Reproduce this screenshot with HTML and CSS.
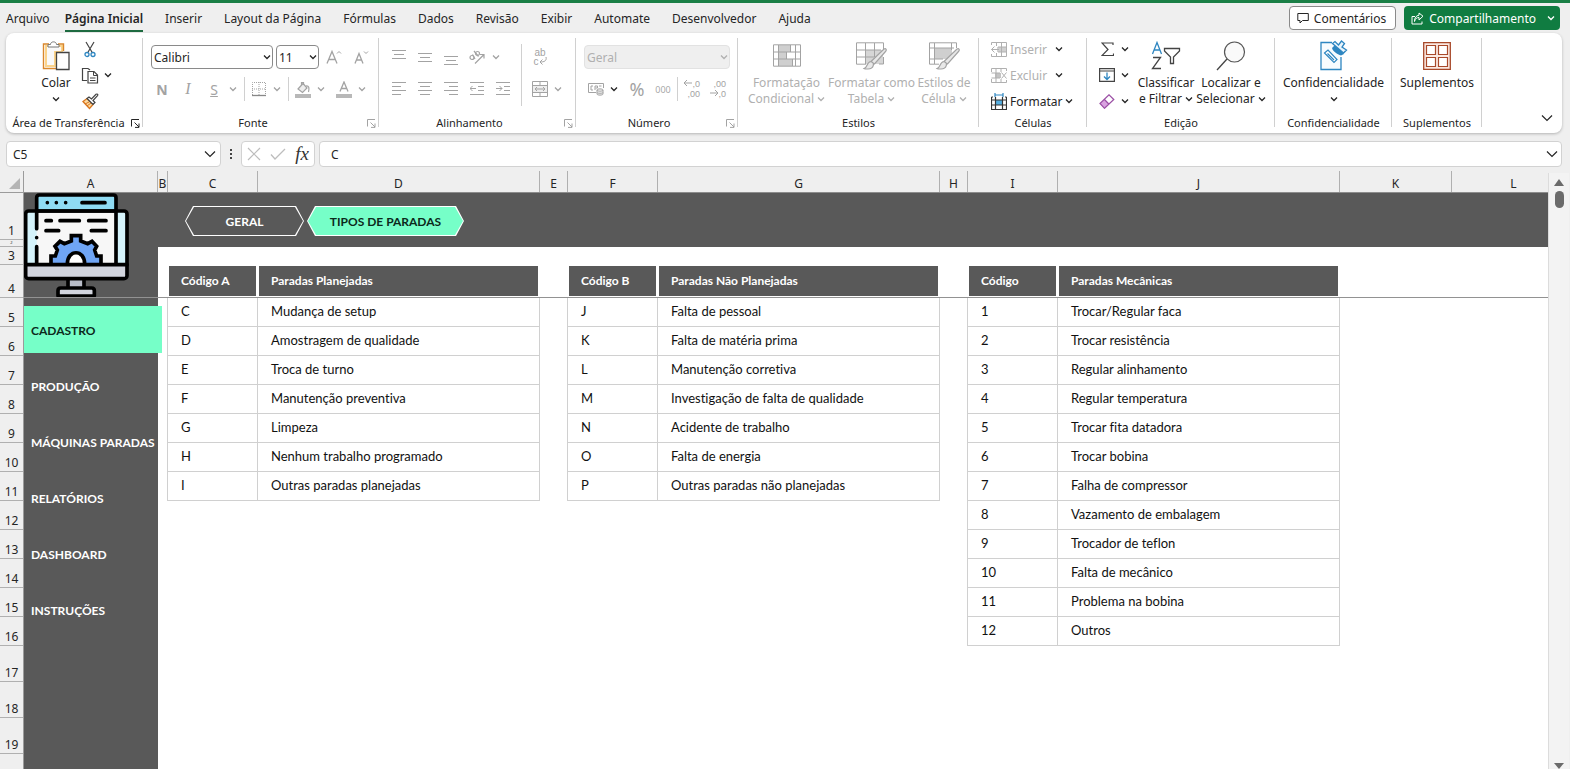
FILE: index.html
```html
<!DOCTYPE html>
<html lang="pt-BR">
<head>
  <meta charset="UTF-8">
  <meta name="viewport" content="width=device-width, initial-scale=1.0">
  <title>Cadastro - Tipos de Paradas</title>
  <link rel="stylesheet" href="styles.css">
</head>
<body>
  <svg class="defs" aria-hidden="true">
    <symbol id="chev" viewBox="0 0 8 8"><path d="M1 2.5 4 5.5 7 2.5" fill="none" stroke="currentColor" stroke-width="1.3"/></symbol>
    <symbol id="chev-lg" viewBox="0 0 12 12"><path d="M1 3.5 6 8.5 11 3.5" fill="none" stroke="currentColor" stroke-width="1.2"/></symbol>
    <symbol id="launch" viewBox="0 0 9 9"><path d="M.5 7.500V.5H8M3.500 3.500 8 8M8 4.500V8.400H4" fill="none" stroke="currentColor"/></symbol>
  </svg>

  <header class="menu-bar">
    <nav class="menu">
      <a href="#">Arquivo</a>
      <a href="#" class="active">Página Inicial</a>
      <a href="#">Inserir</a>
      <a href="#">Layout da Página</a>
      <a href="#">Fórmulas</a>
      <a href="#">Dados</a>
      <a href="#">Revisão</a>
      <a href="#">Exibir</a>
      <a href="#">Automate</a>
      <a href="#">Desenvolvedor</a>
      <a href="#">Ajuda</a>
    </nav>
    <div class="menu-actions">
      <button class="btn-comments">
        <svg width="12" height="12" viewBox="0 0 12 12"><path d="M.8 1.500H11.300V8.500H5.500L3 11V8.500H.8Z" fill="none" stroke="currentColor"/></svg>
        Comentários
      </button>
      <button class="btn-share">
        <svg width="13" height="13" viewBox="0 0 13 13"><path d="M4 4.500H1V12H11V9.500M3.500 9.500C4 6.500 6 5.500 8 5.500V8L12 4.200 8 1V3.200C5 3.500 3.500 6 3.500 9.500Z" fill="none" stroke="currentColor"/></svg>
        <span>Compartilhamento</span>
        <svg class="chev"><use href="#chev"/></svg>
      </button>
    </div>
  </header>

  <section class="ribbon">
    <div class="group g-clipboard">
      <div class="group-body">
        <button class="big">
          <span class="big-icon"><svg width="28" height="31" viewBox="0 0 28 31"><path d="M7 4H1.500V28.500H14" fill="none" stroke="#d9872b" stroke-width="1.400"/><path d="M4 6V26H13V12H20V6Z" fill="#f9f9f9" stroke="#fbd38a" stroke-width="2"/><path d="M16 4H21.500V11" fill="none" stroke="#d9872b" stroke-width="1.400"/><path d="M6 7V4.500H8.500C8.500 1 14.500 1 14.500 4.500H17V7Z" fill="#fff" stroke="#777"/><path d="M14.500 12.500H27V29.500H14.500Z" fill="#fff" stroke="#444" stroke-width="1.300"/></svg></span>
          <span>Colar</span>
          <svg class="chev"><use href="#chev"/></svg>
        </button>
        <div class="rows3">
          <div><button class="ico" aria-label="Recortar"><svg width="12" height="17" viewBox="0 0 12 17"><path d="M2 1 8.500 12M10 1 3.500 12" fill="none" stroke="#444" stroke-width="1.200"/><circle cx="3" cy="13.500" r="2" fill="none" stroke="#2e86c1" stroke-width="1.300"/><circle cx="9" cy="13.500" r="2" fill="none" stroke="#2e86c1" stroke-width="1.300"/></svg></button></div>
          <div><button class="ico" aria-label="Copiar"><svg width="18" height="17" viewBox="0 0 18 17"><path d="M6 13.500H1.500V1.500H7L9 3" fill="none" stroke="#444" stroke-width="1.200"/><path d="M7 4.500H13L16.500 8V16H7Z" fill="#fff" stroke="#444" stroke-width="1.200"/><path d="M12.500 4.500V8.500H16.500M9 11H14.500M9 13.500H14.500" fill="none" stroke="#444"/></svg></button><button class="drop" aria-label="Opções de cópia"><svg class="chev"><use href="#chev"/></svg></button></div>
          <div><button class="ico" aria-label="Pincel de formatação"><svg width="17" height="17" viewBox="0 0 17 17"><path d="M1 8.500 5 5.500 11 11.500 7.500 15.500Z" fill="#fbd9a0" stroke="#d9761f" stroke-width="1.300"/><path d="M3 11 7 9M5 13 9 10" stroke="#d9761f"/><path d="M5 5.500 7 4 9.500 6 14 1.300C15.300.5 16.300 1.500 15.500 2.700L11 7.500 13 9.500 11 11.500Z" fill="#fff" stroke="#444" stroke-width="1.200"/></svg></button></div>
        </div>
      </div>
      <div class="group-foot"><span>Área de Transferência</span><button aria-label="Mais opções"><svg width="9" height="9"><use href="#launch"/></svg></button></div>
    </div>

    <div class="group g-font">
      <div class="group-body rows2">
        <div class="row fields">
          <label class="field font-name"><select aria-label="Fonte"><option>Calibri</option></select><svg class="chev"><use href="#chev"/></svg></label>
          <label class="field font-size"><select aria-label="Tamanho da fonte"><option>11</option></select><svg class="chev"><use href="#chev"/></svg></label>
          <button class="ico off" aria-label="Aumentar fonte"><svg width="16" height="16" viewBox="0 0 16 16"><path d="M1 14.500 6 2.500 11 14.500M3 10.500H9" fill="none" stroke="currentColor" stroke-width="1.300"/><path d="M11 4.500 13 2.500 15 4.500" fill="none" stroke="currentColor"/></svg></button>
          <button class="ico off" aria-label="Diminuir fonte"><svg width="16" height="16" viewBox="0 0 16 16"><path d="M2 14.500 6 4.500 10 14.500M3.500 11H8.500" fill="none" stroke="currentColor" stroke-width="1.300"/><path d="M11 2.500 13 4.500 15 2.500" fill="none" stroke="currentColor"/></svg></button>
        </div>
        <div class="row off">
          <button class="ico letter bold">N</button>
          <button class="ico letter italic">I</button>
          <button class="ico letter under">S</button>
          <button class="drop" aria-label="Sublinhado"><svg class="chev"><use href="#chev"/></svg></button>
          <i class="sep"></i>
          <button class="ico" aria-label="Bordas"><svg width="16" height="16" viewBox="0 0 16 16"><path d="M1.500 14V1.500H14.500V14M8 1V14M1 8H15" fill="none" stroke="currentColor" stroke-dasharray="1 1"/><path d="M1 14.500H15" stroke="#888" stroke-width="1.300"/></svg></button>
          <button class="drop" aria-label="Mais bordas"><svg class="chev"><use href="#chev"/></svg></button>
          <i class="sep"></i>
          <button class="ico" aria-label="Cor de preenchimento"><svg width="16" height="17" viewBox="0 0 16 17"><path d="M3 8 8 2.500 12 7 7.500 11.500Z" fill="#eee" stroke="currentColor" stroke-width="1.200"/><path d="M6.500 4V1.500H8.500V4M11 5C14 4.500 14.500 7 13.500 11" fill="none" stroke="currentColor" stroke-width="1.200"/><path d="M0 13H16V17H0Z" fill="#b8b8b8"/></svg></button>
          <button class="drop" aria-label="Mais cores"><svg class="chev"><use href="#chev"/></svg></button>
          <button class="ico spaced" aria-label="Cor da fonte"><svg width="16" height="17" viewBox="0 0 16 17"><path d="M4 10.500 8 1 12 10.500M5.500 7.500H10.500" fill="none" stroke="currentColor" stroke-width="1.300"/><path d="M0 13H16V17H0Z" fill="#b8b8b8"/></svg></button>
          <button class="drop" aria-label="Mais cores da fonte"><svg class="chev"><use href="#chev"/></svg></button>
        </div>
      </div>
      <div class="group-foot dim"><span>Fonte</span><button aria-label="Mais opções"><svg width="9" height="9"><use href="#launch"/></svg></button></div>
    </div>

    <div class="group g-align">
      <div class="group-body off">
        <div class="rows2">
          <div class="row">
            <button class="ico" aria-label="Alinhar acima"><svg width="14" height="16" viewBox="0 0 14 16"><path d="M0 1.500H14M2 5.500H12M0 9.500H14" stroke="currentColor"/></svg></button>
            <button class="ico" aria-label="Alinhar no meio"><svg width="14" height="16" viewBox="0 0 14 16"><path d="M0 4.500H14M2 8.500H12M0 12.500H14" stroke="currentColor"/></svg></button>
            <button class="ico" aria-label="Alinhar abaixo"><svg width="14" height="16" viewBox="0 0 14 16"><path d="M0 7.500H14M2 11.500H12M0 15.500H14" stroke="currentColor"/></svg></button>
            <button class="ico" aria-label="Orientação"><svg width="16" height="16" viewBox="0 0 16 16"><g fill="none" stroke="currentColor" stroke-width="1.200"><circle cx="3" cy="8.500" r="2"/><path d="M3.500 5.500 6 10M5 2 9.500 7.500"/><circle cx="8.500" cy="4.500" r="2"/><path d="M6 14.500 15 5.500M11 5.500H15V9.500"/></g></svg></button>
            <button class="drop" aria-label="Mais orientações"><svg class="chev"><use href="#chev"/></svg></button>
          </div>
          <div class="row">
            <button class="ico" aria-label="Alinhar à esquerda"><svg width="14" height="14" viewBox="0 0 14 14"><path d="M0 .5H14M0 4.500H9M0 8.500H14M0 12.500H9" stroke="currentColor"/></svg></button>
            <button class="ico" aria-label="Centralizar"><svg width="14" height="14" viewBox="0 0 14 14"><path d="M0 .5H14M2 4.500H12M0 8.500H14M2 12.500H12" stroke="currentColor"/></svg></button>
            <button class="ico" aria-label="Alinhar à direita"><svg width="14" height="14" viewBox="0 0 14 14"><path d="M0 .5H14M5 4.500H14M0 8.500H14M5 12.500H14" stroke="currentColor"/></svg></button>
            <button class="ico" aria-label="Diminuir recuo"><svg width="14" height="14" viewBox="0 0 14 14"><path d="M0 .5H14M8 4.500H14M8 8.500H14M0 12.500H14M0 6.500H6M2.500 4 0 6.500 2.500 9" fill="none" stroke="currentColor"/></svg></button>
            <button class="ico" aria-label="Aumentar recuo"><svg width="14" height="14" viewBox="0 0 14 14"><path d="M0 .5H14M8 4.500H14M8 8.500H14M0 12.500H14M0 6.500H6M3.500 4 6 6.500 3.500 9" fill="none" stroke="currentColor"/></svg></button>
          </div>
        </div>
        <i class="sep tall"></i>
        <div class="rows2">
          <div class="row"><button class="ico wrap" aria-label="Quebrar texto"><span>ab</span><span>c<svg width="8" height="8" viewBox="0 0 8 8"><path d="M7 0C8 4 5 5 1 5M3.500 2.500 1 5 3.500 7.500" fill="none" stroke="currentColor"/></svg></span></button></div>
          <div class="row">
            <button class="ico" aria-label="Mesclar"><svg width="16" height="16" viewBox="0 0 16 16"><path d="M1 4.500H15V11.500H1Z" fill="#eee"/><path d="M.5 .5H15.500V15.500H.5ZM.5 4.500H15.500M.5 11.500H15.500M8 .5V4.500M8 11.500V15.500M3 8H13M5 6 3 8 5 10M11 6 13 8 11 10" fill="none" stroke="currentColor"/></svg></button>
            <button class="drop" aria-label="Mais opções de mesclar"><svg class="chev"><use href="#chev"/></svg></button>
          </div>
        </div>
      </div>
      <div class="group-foot dim"><span>Alinhamento</span><button aria-label="Mais opções"><svg width="9" height="9"><use href="#launch"/></svg></button></div>
    </div>

    <div class="group g-number">
      <div class="group-body rows2">
        <div class="row"><label class="field number-format off"><select aria-label="Formato de número" disabled><option>Geral</option></select><svg class="chev"><use href="#chev"/></svg></label></div>
        <div class="row off">
          <button class="ico" aria-label="Moeda"><svg width="16" height="14" viewBox="0 0 16 14"><path d="M8 10.500H.5V1.500H15.500V6M5 4H3V8H5M7 8V4H9.500V6H7.500M11 4H13.500" fill="none" stroke="currentColor"/><path d="M9 8C9 6.500 15 6.500 15 8V12C15 13.500 9 13.500 9 12ZM9 8C9 9.500 15 9.500 15 8M9 10.500C9 11.500 15 11.500 15 10.500" fill="#eee" stroke="currentColor"/></svg></button>
          <button class="drop on" aria-label="Mais moedas"><svg class="chev"><use href="#chev"/></svg></button>
          <button class="ico pct">%</button>
          <button class="ico zeros">000</button>
          <i class="sep"></i>
          <button class="ico dec"><span><svg width="8" height="8" viewBox="0 0 8 8"><path d="M0 4H8M3 1 0 4 3 7" fill="none" stroke="currentColor"/></svg>,0</span><span>,00</span></button>
          <button class="ico dec"><span>,00</span><span><svg width="8" height="8" viewBox="0 0 8 8"><path d="M0 4H8M5 1 8 4 5 7" fill="none" stroke="currentColor"/></svg>,0</span></button>
        </div>
      </div>
      <div class="group-foot dim"><span>Número</span><button aria-label="Mais opções"><svg width="9" height="9"><use href="#launch"/></svg></button></div>
    </div>

    <div class="group g-styles">
      <div class="group-body off">
        <button class="big wide">
          <span class="big-icon"><svg width="28" height="24" viewBox="0 0 28 24"><path d="M5.500 1H17.500V8H13.500V15H19.500V22H5.500Z" fill="#cfcfcf"/><path d="M.5 .8H27.500V22.200H.5ZM.5 8H27.500M.5 15H27.500M5.500 1V22M22.500 1V22M17.500 1V8M13.500 8V15M19.500 15V22" fill="none" stroke="currentColor"/></svg></span>
          <span>Formatação</span>
          <span>Condicional <svg class="chev"><use href="#chev"/></svg></span>
        </button>
        <button class="big wide">
          <span class="big-icon"><svg width="31" height="28" viewBox="0 0 31 28"><path d="M9.500 8H27V22H9.500Z" fill="#d6d6d6"/><path d="M10 22.200H.5V.8H27.500V7M.5 8H25M.5 15H18M9.500 1V22M18.500 1V15M23 22H27.500V15" fill="none" stroke="currentColor"/><path d="M8 26.500C12 26 10 20 15 19.500 19 20.500 18 27 12 27 10 27 8.500 27 8 26.500ZM15 19.500 28 7C30 6 31 8 29.500 9.500L18.500 22Z" fill="#e8e8e8" stroke="currentColor" stroke-width="1.200"/></svg></span>
          <span>Formatar como</span>
          <span>Tabela <svg class="chev"><use href="#chev"/></svg></span>
        </button>
        <button class="big">
          <span class="big-icon"><svg width="31" height="28" viewBox="0 0 31 28"><path d="M5.500 6H23V17H5.500Z" fill="#cfcfcf"/><path d="M10 22.200H.5V.8H27.500V6M.5 6H25M.5 17H14M5.500 1V22M22.500 1V8" fill="none" stroke="currentColor"/><path d="M8 26.500C12 26 10 20 15 19.500 19 20.500 18 27 12 27 10 27 8.500 27 8 26.500ZM15 19.500 28 7C30 6 31 8 29.500 9.500L18.500 22Z" fill="#e8e8e8" stroke="currentColor" stroke-width="1.200"/></svg></span>
          <span>Estilos de</span>
          <span>Célula <svg class="chev"><use href="#chev"/></svg></span>
        </button>
      </div>
      <div class="group-foot plain"><span>Estilos</span></div>
    </div>

    <div class="group g-cells">
      <div class="group-body rows3">
        <div><button class="text-btn off"><svg width="16" height="15" viewBox="0 0 16 15"><path d="M6 5H15V10H6Z" fill="#cfcfcf"/><path d="M.5 3V.5H15.500V14.500H.5V12M5.500 .5V4M5.500 11V14.500M10.500 .5V14.500M7 5H15.500M7 10H15.500M.5 7.500H8M3.500 4.500 .5 7.500 3.500 10.500" fill="none" stroke="currentColor"/></svg>Inserir</button><button class="drop far" aria-label="Mais inserir"><svg class="chev"><use href="#chev"/></svg></button></div>
        <div><button class="text-btn off"><svg width="16" height="15" viewBox="0 0 16 15"><path d="M4 5H10V10H4Z" fill="#c4c4c4"/><path d="M.5 4V.5H15.500V3M.5 11V14.500H15.500V12M5 .5V14.500M10 .5V4M10 11V14.500M.5 5H9M.5 10H9M10.500 4.500 15.500 10.500M15.500 4.500 10.500 10.500" fill="none" stroke="currentColor"/></svg>Excluir</button><button class="drop far" aria-label="Mais excluir"><svg class="chev"><use href="#chev"/></svg></button></div>
        <div><button class="text-btn"><svg width="16" height="17" viewBox="0 0 16 17"><path d="M4.500 7H11.500V12H4.500Z" fill="#55aee0"/><path d="M.5 4V16.500H15.500V4M.5 7H15.500M.5 12H15.500M4.500 4V16.500M11.500 4V16.500M.5 4H2M14 4H15.500" fill="none" stroke="#333" stroke-width="1.200"/><path d="M4 2H12M4 0V4M12 0V4" stroke="#2e86c1" stroke-width="1.200"/></svg>Formatar<svg class="chev"><use href="#chev"/></svg></button></div>
      </div>
      <div class="group-foot plain"><span>Células</span></div>
    </div>

    <div class="group g-edit">
      <div class="group-body">
        <div class="rows3">
          <div><button class="ico" aria-label="AutoSoma"><svg width="13" height="15" viewBox="0 0 13 15"><path d="M12 3V1H1L7 7.500 1 13.500H12.500V11.500" fill="none" stroke="#444" stroke-width="1.200"/></svg></button><button class="drop" aria-label="Mais funções"><svg class="chev"><use href="#chev"/></svg></button></div>
          <div><button class="ico" aria-label="Preencher"><svg width="16" height="14" viewBox="0 0 16 14"><path d="M.6 .6H15.400V13.400H.6ZM.6 3H15.400" fill="none" stroke="#444" stroke-width="1.200"/><path d="M8 4.500V11.500M5 8.500 8 11.500 11 8.500" fill="none" stroke="#2e86c1" stroke-width="1.300"/></svg></button><button class="drop" aria-label="Mais preenchimentos"><svg class="chev"><use href="#chev"/></svg></button></div>
          <div><button class="ico" aria-label="Limpar"><svg width="16" height="15" viewBox="0 0 16 15"><path d="M1 9.500 5.500 5.500 9.500 10 5 14.300Z" fill="#d9a3e0"/><path d="M1 9.500 10 .8 14.800 5.500 5.500 14.300ZM5.500 5.500 9.800 10" fill="none" stroke="#9b4fa5" stroke-width="1.200"/></svg></button><button class="drop" aria-label="Mais limpar"><svg class="chev"><use href="#chev"/></svg></button></div>
        </div>
        <button class="big sort">
          <span class="big-icon"><svg width="30" height="29" viewBox="0 0 30 29"><path d="M1.500 13 6 1.500 10.500 13M3 9H9" fill="none" stroke="#2e86c1" stroke-width="1.300"/><path d="M2 16.500H9.500L1.500 27.500H10" fill="none" stroke="#444" stroke-width="1.300"/><path d="M13.500 7.500H28.500V10L22.500 16V22.500H19.500V16L13.500 10Z" fill="none" stroke="#444" stroke-width="1.300"/></svg></span>
          <span>Classificar</span>
          <span>e Filtrar <svg class="chev"><use href="#chev"/></svg></span>
        </button>
        <button class="big">
          <span class="big-icon"><svg width="30" height="30" viewBox="0 0 30 30"><circle cx="18.500" cy="11" r="10" fill="#fafafa" stroke="#555" stroke-width="1.200"/><path d="M11 18 1 29" stroke="#444" stroke-width="1.300"/></svg></span>
          <span>Localizar e</span>
          <span>Selecionar <svg class="chev"><use href="#chev"/></svg></span>
        </button>
      </div>
      <div class="group-foot plain"><span>Edição</span></div>
    </div>

    <div class="group g-conf">
      <div class="group-body">
        <button class="big">
          <span class="big-icon"><svg width="28" height="31" viewBox="0 0 28 31"><path d="M12 2.500H1V29.500H21V17" fill="#f7fbfe" stroke="#2e86c1" stroke-width="1.300"/><path d="M4.500 13 8 10 17 19.500 14 22.500ZM7.500 13.500 14 20" fill="#fff" stroke="#2e86c1" stroke-width="1.200"/><path d="M12 8 15 5 24 14 21 15.500C17 14 13 11.500 12 8Z" fill="#2e86c1"/><path d="M12.500 3.500 15 1.500 18.500 5 21.500 1 24.500 3.500 22 7 26.500 10 23.500 13Z" fill="#e9f4fb" stroke="#2e86c1" stroke-width="1.300"/></svg></span>
          <span>Confidencialidade</span>
          <svg class="chev"><use href="#chev"/></svg>
        </button>
      </div>
      <div class="group-foot plain"><span>Confidencialidade</span></div>
    </div>

    <div class="group g-addins">
      <div class="group-body">
        <button class="big">
          <span class="big-icon"><svg width="28" height="28" viewBox="0 0 28 28"><path d="M.7 .7H27.300V27.300H.7Z" fill="#fbe9e2" stroke="#a8492a" stroke-width="1.300"/><path d="M3.500 3.500H12.500V12.500H3.500ZM15.500 3.500H24.500V12.500H15.500ZM3.500 15.500H12.500V24.500H3.500ZM15.500 15.500H24.500V24.500H15.500Z" fill="#fff" stroke="#a8492a" stroke-width="1.200"/></svg></span>
          <span>Suplementos</span>
        </button>
      </div>
      <div class="group-foot plain"><span>Suplementos</span></div>
    </div>

    <button class="collapse" aria-label="Recolher faixa"><svg width="12" height="12"><use href="#chev-lg"/></svg></button>
  </section>

  <section class="formula-bar">
    <label class="bar-box name-box"><input type="text" value="C5" aria-label="Caixa de nome"><svg width="12" height="12"><use href="#chev-lg"/></svg></label>
    <span class="dots"><i></i><i></i><i></i></span>
    <div class="bar-box fx-box">
      <button aria-label="Cancelar"><svg width="14" height="14" viewBox="0 0 14 14"><path d="M1 1 13 13M13 1 1 13" stroke="#bdbdbd" stroke-width="1.200"/></svg></button>
      <button aria-label="Inserir"><svg width="16" height="14" viewBox="0 0 16 14"><path d="M1 7.500 5 12 15 2" fill="none" stroke="#bdbdbd" stroke-width="1.300"/></svg></button>
      <button class="fx">fx</button>
    </div>
    <label class="bar-box formula"><input type="text" value="C" aria-label="Barra de fórmulas"><svg width="12" height="12"><use href="#chev-lg"/></svg></label>
  </section>

  <main class="sheet">
    <div class="corner"></div>
    <div class="columns">
      <span class="col-a">A</span><span class="col-b">B</span><span class="col-code">C</span><span class="col-name">D</span><span class="col-gap">E</span><span class="col-code">F</span><span class="col-name">G</span><span class="col-gap">H</span><span class="col-code">I</span><span class="col-name">J</span><span class="col-k">K</span><span class="col-l">L</span>
    </div>
    <div class="scrollbar">
      <i class="arrow-up"></i>
      <i class="thumb"></i>
      <i class="arrow-down"></i>
    </div>
    <div class="row-heads">
      <span class="r1">1</span><span class="r2">2</span><span class="r3">3</span><span class="r4">4</span>
      <span>5</span><span>6</span><span>7</span><span>8</span><span>9</span><span>10</span><span>11</span><span>12</span><span>13</span><span>14</span><span>15</span><span>16</span>
      <span class="high">17</span><span class="high">18</span><span class="high">19</span>
    </div>
    <div class="canvas">
      <aside class="sidebar">
        <svg class="logo" width="105" height="105" viewBox="72 83 315 315">
          <rect x="76" y="136" width="306" height="205" rx="9" fill="#d5f3fb"/>
          <path d="M110 136H348V300H110Z" fill="#f7f7f7"/>
          <path d="M110 136V98Q110 88 120 88H338Q348 88 348 98V136Z" fill="#8fdbf3"/>
          <path d="M76 298H382V332Q382 341 373 341H85Q76 341 76 332Z" fill="#d2d5de"/>
          <path d="M204 344H252V368H204Z" fill="#b9bdc8"/>
          <path d="M174 394V376Q174 368 182 368H275Q283 368 283 376V394Z" fill="#d2d5de"/>
          <path d="M153 298V272H166L172 254 162 243 180 224 193 233 214 225V210H242V225L263 233 277 224 293 243 284 254 290 272H303V298H256C256 250 200 250 200 298Z" fill="#6fa5f5"/>
          <path d="M200 298C200 250 256 250 256 298Z" fill="#fff"/>
          <g fill="none" stroke="#000" stroke-width="11" stroke-linecap="round" stroke-linejoin="round">
            <rect x="77" y="137" width="304" height="203" rx="9"/>
            <path d="M110 190V97Q110 89 118 89H340Q348 89 348 97V296M110 244V296M110 137H348M77 298H381M110 217V217.100"/>
            <path d="M142 112V112.100M169 112V112.100M197 112V112.100M246 112H315M138 166H154M180 166H238M266 166H318M138 196H176M274 196H318"/>
            <path d="M204 344V365M252 344V365M174 392V376Q174 368 182 368H275Q283 368 283 376V392H174"/>
            <path d="M153 294V272H166L172 254 165 243 180 228 193 235 214 227V211H242V227L263 235 276 228 290 243 284 254 290 272H303V294M202 296C202 251 254 251 254 296" stroke-linecap="butt" stroke-linejoin="miter"/>
          </g>
        </svg>
        <nav class="side-nav">
          <a href="#" class="active">CADASTRO</a>
          <a href="#">PRODUÇÃO</a>
          <a href="#">MÁQUINAS PARADAS</a>
          <a href="#">RELATÓRIOS</a>
          <a href="#">DASHBOARD</a>
          <a href="#">INSTRUÇÕES</a>
        </nav>
      </aside>
      <div class="content">
        <div class="band">
          <button class="hex"><span>GERAL</span></button>
          <button class="hex selected"><span>TIPOS DE PARADAS</span></button>
        </div>
        <div class="tables">
          <table>
            <thead><tr><th class="code">Código A</th><th>Paradas Planejadas</th></tr></thead>
            <tbody>
              <tr><td>C</td><td>Mudança de setup</td></tr>
              <tr><td>D</td><td>Amostragem de qualidade</td></tr>
              <tr><td>E</td><td>Troca de turno</td></tr>
              <tr><td>F</td><td>Manutenção preventiva</td></tr>
              <tr><td>G</td><td>Limpeza</td></tr>
              <tr><td>H</td><td>Nenhum trabalho programado</td></tr>
              <tr><td>I</td><td>Outras paradas planejadas</td></tr>
            </tbody>
          </table>
          <table>
            <thead><tr><th class="code">Código B</th><th>Paradas Não Planejadas</th></tr></thead>
            <tbody>
              <tr><td>J</td><td>Falta de pessoal</td></tr>
              <tr><td>K</td><td>Falta de matéria prima</td></tr>
              <tr><td>L</td><td>Manutenção corretiva</td></tr>
              <tr><td>M</td><td>Investigação de falta de qualidade</td></tr>
              <tr><td>N</td><td>Acidente de trabalho</td></tr>
              <tr><td>O</td><td>Falta de energia</td></tr>
              <tr><td>P</td><td>Outras paradas não planejadas</td></tr>
            </tbody>
          </table>
          <table>
            <thead><tr><th class="code">Código</th><th>Paradas Mecânicas</th></tr></thead>
            <tbody>
              <tr><td>1</td><td>Trocar/Regular faca</td></tr>
              <tr><td>2</td><td>Trocar resistência</td></tr>
              <tr><td>3</td><td>Regular alinhamento</td></tr>
              <tr><td>4</td><td>Regular temperatura</td></tr>
              <tr><td>5</td><td>Trocar fita datadora</td></tr>
              <tr><td>6</td><td>Trocar bobina</td></tr>
              <tr><td>7</td><td>Falha de compressor</td></tr>
              <tr><td>8</td><td>Vazamento de embalagem</td></tr>
              <tr><td>9</td><td>Trocador de teflon</td></tr>
              <tr><td>10</td><td>Falta de mecânico</td></tr>
              <tr><td>11</td><td>Problema na bobina</td></tr>
              <tr><td>12</td><td>Outros</td></tr>
            </tbody>
          </table>
        </div>
      </div>
    </div>
  </main>
</body>
</html>
```

FILE: styles.css
```css
:root {
  --green: #107c41;
  --mint: #76ffc8;
  --dark: #595959;
  --chrome: #efefef;
  --text: #252525;
  --off: #a3a3a3;
  --off-text: #b0b0b0;
  --line: #d0d0d0;
}

* {
  margin: 0;
  padding: 0;
  box-sizing: border-box;
}

body {
  display: flex;
  flex-direction: column;
  height: 100vh;
  overflow: hidden;
  border-top: 3px solid #1a7f46;
  background: var(--chrome);
  color: var(--text);
  font-family: "Noto Sans", "Open Sans", sans-serif;
  font-size: 12px;
}

button, select, input {
  border: 0;
  background: none;
  color: inherit;
  font: inherit;
}

a {
  color: inherit;
  text-decoration: none;
}

svg {
  display: block;
  flex: none;
}

.defs {
  position: absolute;
  width: 0;
  height: 0;
}

.chev {
  width: 8px;
  height: 8px;
}

.off {
  color: var(--off);
}

/* Menu */
.menu-bar {
  display: flex;
  justify-content: space-between;
  align-items: center;
  height: 30px;
  padding: 0 10px 0 6px;
}

.menu {
  display: flex;
  gap: 22px;
  padding-top: 3px;
  line-height: 22px;
}

.menu a {
  border-bottom: 2px solid transparent;
}

.menu a:first-child {
  margin-right: -7px;
}

.menu .active {
  border-color: #1e6b41;
  font-weight: 600;
}

.menu-actions {
  display: flex;
  gap: 8px;
}

.menu-actions button {
  display: flex;
  align-items: center;
  gap: 5px;
  height: 24px;
  border-radius: 4px;
}

.btn-comments {
  padding: 0 9px 0 7px;
  border: 1px solid #8a8a8a;
  background: #fff;
}

.btn-share {
  padding: 0 5px 0 7px;
  background: var(--green);
  color: #fff;
}

.btn-share .chev {
  margin-left: 6px;
}

/* Ribbon */
.ribbon {
  display: flex;
  flex: none;
  height: 100px;
  margin: 0 8px 0 6px;
  border-radius: 8px;
  background: #fff;
  box-shadow: 0 1px 3px rgba(0, 0, 0, 0.25);
}

.group {
  position: relative;
  display: flex;
  flex-direction: column;
  flex: none;
  padding-top: 3px;
}

.group::after {
  content: "";
  position: absolute;
  top: 5px;
  right: 0;
  bottom: 6px;
  width: 1px;
  background: var(--line);
}

.g-clipboard { width: 137px; }
.g-font { width: 236px; }
.g-align { width: 197px; }
.g-number { width: 162px; }
.g-styles { width: 241px; }
.g-cells { width: 108px; }
.g-edit { width: 188px; }
.g-conf { width: 117px; }
.g-addins { width: 90px; }

.group-body {
  display: flex;
  height: 78px;
}

.g-clipboard .group-body { padding-left: 28px; }
.g-font .group-body { padding-left: 6px; }
.g-align .group-body { padding-left: 7px; }
.g-number .group-body { padding-left: 8px; }
.g-styles .group-body { padding-left: 6px; }
.g-cells .group-body { padding-left: 12px; }
.g-edit .group-body { padding-left: 8px; }
.g-conf .group-body,
.g-addins .group-body { justify-content: center; }

.group-foot {
  display: flex;
  align-items: center;
  height: 16px;
  font-size: 11px;
}

.group-foot span {
  flex: 1;
  text-align: center;
  white-space: nowrap;
}

.g-clipboard .group-foot {
  padding-left: 4px;
}

.group-foot button {
  display: flex;
  justify-content: center;
  width: 16px;
  padding-top: 2px;
}

.group-foot.dim button {
  color: var(--off);
}

.rows3 > div {
  display: flex;
  align-items: center;
  height: 26px;
}

.rows3 {
  flex-direction: column;
}

.rows2 {
  display: flex;
  flex-direction: column;
  gap: 6px;
  padding-top: 8px;
}

.row {
  display: flex;
  align-items: center;
  height: 26px;
}

.ico {
  display: flex;
  align-items: center;
  justify-content: center;
  width: 24px;
  height: 24px;
}

.drop {
  display: flex;
  align-items: center;
  justify-content: center;
  width: 12px;
  height: 24px;
}

.far {
  margin-left: 6px;
}

.spaced {
  margin-left: 5px;
}

.on {
  color: var(--text);
}

.sep {
  width: 1px;
  height: 24px;
  margin: 0 2px 0 5px;
  background: var(--line);
}

.sep.tall {
  height: 62px;
  margin: 8px 6px 0 5px;
}

.letter {
  width: 26px;
  font-size: 14px;
}

.bold { font-weight: 700; }

.italic {
  font-family: "Liberation Serif", serif;
  font-size: 16px;
  font-style: italic;
}

.under { text-decoration: underline; }

.g-align .row .ico { width: 26px; }
.g-align .sep + .rows2 .ico { width: 24px; }

.big {
  display: flex;
  flex-direction: column;
  align-items: center;
  width: 64px;
  line-height: 16px;
  white-space: nowrap;
}

.big.wide { width: 85px; }
.g-styles .big:last-child { width: 60px; }
.g-clipboard .big { width: 44px; }
.big.sort { width: 66px; margin-left: 2px; }

.big > span {
  display: flex;
  align-items: center;
  gap: 3px;
}

.big > .big-icon {
  height: 39px;
}

.big > .chev {
  margin-top: 4px;
}

.off > .big span + span,
.text-btn.off {
  color: var(--off-text);
}

.text-btn {
  display: flex;
  align-items: center;
  gap: 3px;
}

.field {
  position: relative;
  display: flex;
  align-items: center;
  height: 24px;
  border: 1px solid #8a8a8a;
  border-radius: 4px;
  background: #fff;
}

.field select {
  width: 100%;
  height: 22px;
  padding-left: 2px;
  appearance: none;
  opacity: 1;
}

.field .chev {
  position: absolute;
  right: 1px;
  pointer-events: none;
}

.fields {
  gap: 3px;
  padding-left: 2px;
}

.font-name { width: 122px; }
.font-size { width: 43px; }

.number-format {
  width: 146px;
  border-color: #e2e2e2;
  background: var(--chrome);
  color: var(--off-text);
}

.wrap {
  flex-direction: column;
  font-family: "Liberation Sans", sans-serif;
  font-size: 10px;
  line-height: 9px;
}

.wrap span,
.dec span {
  display: flex;
}

.pct {
  margin-left: 4px;
  font-size: 18px;
  width: 26px;
}

.zeros {
  width: 26px;
  font-family: "Open Sans", sans-serif;
  font-size: 9px;
}

.g-number .sep { margin: 0 1px; }

.dec {
  flex-direction: column;
  align-items: flex-end;
  width: 26px;
  padding-right: 5px;
  font-family: "Liberation Sans", sans-serif;
  font-size: 9px;
  line-height: 10px;
}

.collapse {
  margin: 79px 9px 0 auto;
  align-self: flex-start;
}

/* Formula bar */
.formula-bar {
  display: flex;
  flex: none;
  height: 26px;
  margin: 8px 8px 4px 6px;
}

.bar-box {
  display: flex;
  align-items: center;
  border: 1px solid #d2d2d2;
  border-radius: 4px;
  background: #fff;
}

.bar-box input {
  flex: 1;
  min-width: 0;
  outline: 0;
}

.name-box {
  width: 215px;
  padding: 0 4px 0 6px;
}

.dots {
  display: flex;
  flex-direction: column;
  justify-content: center;
  gap: 2px;
  width: 20px;
  padding-left: 9px;
}

.dots i {
  width: 2px;
  height: 2px;
  background: #444;
}

.fx-box {
  justify-content: space-between;
  width: 74px;
  padding: 0 5px;
}

.fx {
  color: #333;
  font-family: "Liberation Serif", serif;
  font-size: 19px;
  font-style: italic;
}

.formula {
  flex: 1;
  margin-left: 4px;
  padding: 0 3px 0 11px;
}

/* Sheet */
.sheet {
  display: grid;
  flex: 1;
  grid-template-columns: 24px 1fr 22px;
  grid-template-rows: 22px 1fr;
  min-height: 0;
}

.corner {
  display: flex;
  align-items: flex-end;
  justify-content: flex-end;
  padding: 0 3px 3px 0;
  border-right: 1px solid #9b9b9b;
  border-bottom: 1px solid #9b9b9b;
}

.corner::before {
  content: "";
  border-left: 11px solid transparent;
  border-bottom: 11px solid #b5b5b5;
}

.columns {
  display: flex;
  overflow: hidden;
  border-bottom: 1px solid #8c8c8c;
}

.columns span {
  flex: none;
  padding-top: 2px;
  border-right: 1px solid #b0b0b0;
  text-align: center;
  line-height: 21px;
}

.col-a { width: 134px; }
.col-b { width: 10px; }
.col-code { width: 90px; }
.col-name { width: 282px; }
.col-gap { width: 28px; }
.col-k { width: 112px; }
.col-l { width: 124px; }

.scrollbar {
  display: flex;
  grid-row: 1 / 3;
  grid-column: 3;
  flex-direction: column;
  align-items: center;
  margin: 2px 1px 0 0;
  padding-top: 6px;
  border-left: 1px solid #dcdcdc;
  background: #f3f3f3;
}

.arrow-up {
  border: 5px solid transparent;
  border-top: 0;
  border-bottom: 7px solid #6b6b6b;
}

.thumb {
  width: 9px;
  height: 17px;
  margin-top: 5px;
  border-radius: 5px;
  background: #6b6b6b;
}

.arrow-down {
  margin-top: auto;
  border: 5px solid transparent;
  border-top: 6px solid #6b6b6b;
  border-bottom: 0;
}

.row-heads {
  border-right: 1px solid #9b9b9b;
  overflow: hidden;
}

.row-heads span {
  display: flex;
  align-items: flex-end;
  justify-content: center;
  height: 29px;
  border-bottom: 1px solid #b0b0b0;
  line-height: 16px;
}

.row-heads .r1 { height: 47px; }
.row-heads .r2 { height: 7px; font-size: 4px; line-height: 6px; }
.row-heads .r3 { height: 18px; }
.row-heads .r4 { height: 33px; }
.row-heads .high { height: 36px; }

.canvas {
  position: relative;
  display: grid;
  grid-template-columns: 134px 1fr;
  min-height: 0;
  overflow: hidden;
  background: #fff;
  font-family: Lato, "Open Sans", sans-serif;
}

/* freeze pane line */
.canvas::after {
  content: "";
  position: absolute;
  top: 104px;
  left: 0;
  right: 0;
  height: 1px;
  background: #929292;
}

.sidebar {
  background: var(--dark);
  color: #fff;
}

.side-nav {
  display: flex;
  flex-direction: column;
  gap: 9px;
  margin: 8px -4px 0 0;
}

.side-nav a {
  padding: 2px 0 0 7px;
  font-weight: 700;
  line-height: 45px;
  white-space: nowrap;
}

.side-nav .active {
  background: var(--mint);
  color: #0c2a1c;
}

.content {
  min-width: 0;
}

.band {
  display: flex;
  align-items: flex-start;
  gap: 3px;
  height: 54px;
  padding: 13px 0 0 27px;
  background: var(--dark);
}

.hex {
  display: flex;
  width: 119px;
  height: 30px;
  padding: 1px;
  background: #fff;
  color: #fff;
  font-weight: 700;
  clip-path: polygon(0 50%, 8px 0, calc(100% - 8px) 0, 100% 50%, calc(100% - 8px) 100%, 8px 100%);
}

.hex span {
  display: flex;
  flex: 1;
  align-items: center;
  justify-content: center;
  height: 28px;
  background: var(--dark);
  clip-path: polygon(0 50%, 8px 0, calc(100% - 8px) 0, 100% 50%, calc(100% - 8px) 100%, 8px 100%);
}

.hex.selected {
  width: 157px;
  color: #0c2a1c;
}

.hex.selected span {
  background: var(--mint);
}

.tables {
  display: flex;
  align-items: flex-start;
  gap: 27px;
  padding: 18px 0 0 9px;
}

table {
  flex: none;
  width: 373px;
  table-layout: fixed;
  border-collapse: separate;
  border-spacing: 0;
  font-variant-ligatures: none;
}

th {
  height: 33px;
  padding: 0 0 2px 12px;
  border: solid #fff;
  border-width: 1px 2px 2px 2px;
  background: var(--dark);
  background-clip: padding-box;
  color: #fff;
  text-align: left;
}

th.code {
  width: 90px;
  border-right-width: 1px;
}

td {
  height: 29px;
  padding: 0 0 2px 13px;
  border-left: 1px solid var(--line);
  border-bottom: 1px solid var(--line);
  color: #111;
  font-size: 13px;
}

td:last-child {
  border-right: 1px solid var(--line);
}
```
